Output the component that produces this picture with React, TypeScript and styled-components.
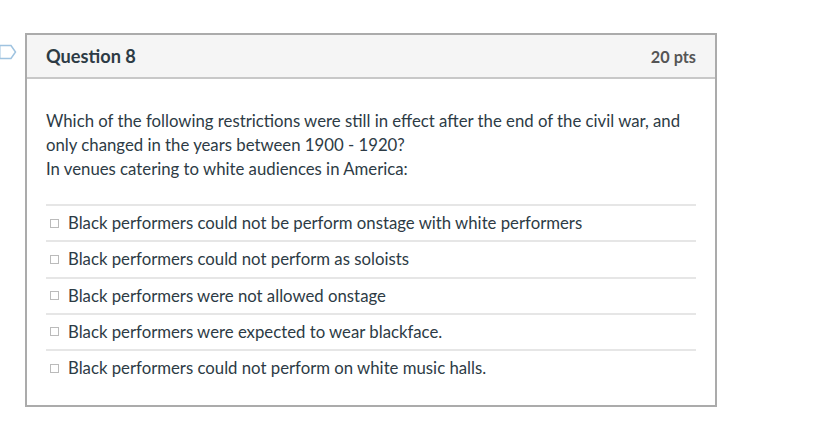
import styled, { createGlobalStyle } from "styled-components";

const GlobalStyle = createGlobalStyle`
	body {
		margin: 0;
		background: #fff;
		font-family: Lato, "Liberation Sans", sans-serif;
		color: #2d3b45;
	}
`;

const answers = [
	"Black performers could not be perform onstage with white performers",
	"Black performers could not perform as soloists",
	"Black performers were not allowed onstage",
	"Black performers were expected to wear blackface.",
	"Black performers could not perform on white music halls.",
];

function App() {
	return (
		<>
			<GlobalStyle />
			<Page>
				<FlagColumn>
					<Flag width="18" height="18" viewBox="0 0 18 18">
						<path d="M0.75 2.5 H12 L16.5 9 L12 15.5 H0.75 Z" fill="#fff" stroke="#9fc3e0" strokeWidth="1.5" />
					</Flag>
				</FlagColumn>
				<Card>
					<Header>
						<Title>Question 8</Title>
						<Points>20 pts</Points>
					</Header>
					<Body>
						<QuestionText>
							Which of the following restrictions were still in effect after the end of the civil war, and only
							changed in the years between 1900 - 1920?
							<br />
							In venues catering to white audiences in America:
						</QuestionText>
						<AnswerList>
							{answers.map((a) => (
								<Answer key={a}>
									<Box />
									<span>{a}</span>
								</Answer>
							))}
						</AnswerList>
					</Body>
				</Card>
			</Page>
		</>
	);
}

export default App;

const Page = styled.div`
	display: flex;
	padding-top: 33px;
`;

const FlagColumn = styled.div`
	width: 25px;
	padding-top: 10px;
`;

const Flag = styled.svg`
	display: block;
	margin-left: -1px;
`;

const Card = styled.div`
	width: 688px;
	border: 2px solid #ababab;
	background: #fff;
`;

const Header = styled.div`
	display: flex;
	justify-content: space-between;
	align-items: center;
	height: 42px;
	padding: 0 19px 0 19px;
	background: #f5f5f5;
	border-bottom: 2px solid #c8c8c8;
`;

const Title = styled.div`
	font-size: 18.2px;
	font-weight: 700;
	color: #2d3b45;
`;

const Points = styled.div`
	font-size: 16.3px;
	font-weight: 700;
	color: #555;
`;

const Body = styled.div`
	padding: 30px 19px 20px 19px;
`;

const QuestionText = styled.div`
	font-size: 16.75px;
	line-height: 24px;
	margin-bottom: 23px;
`;

const AnswerList = styled.div`
	display: flex;
	flex-direction: column;
`;

const Answer = styled.div`
	display: flex;
	align-items: center;
	gap: 9px;
	border-top: 2px solid #e6e6e6;
	padding: 6px 0 6px 4px;
	line-height: 22.25px;
	font-size: 16.75px;
	color: #2d3b45;
`;

const Box = styled.span`
	width: 7px;
	height: 7px;
	border: 1px solid #bbb;
	background: #fff;
	flex-shrink: 0;
`;
